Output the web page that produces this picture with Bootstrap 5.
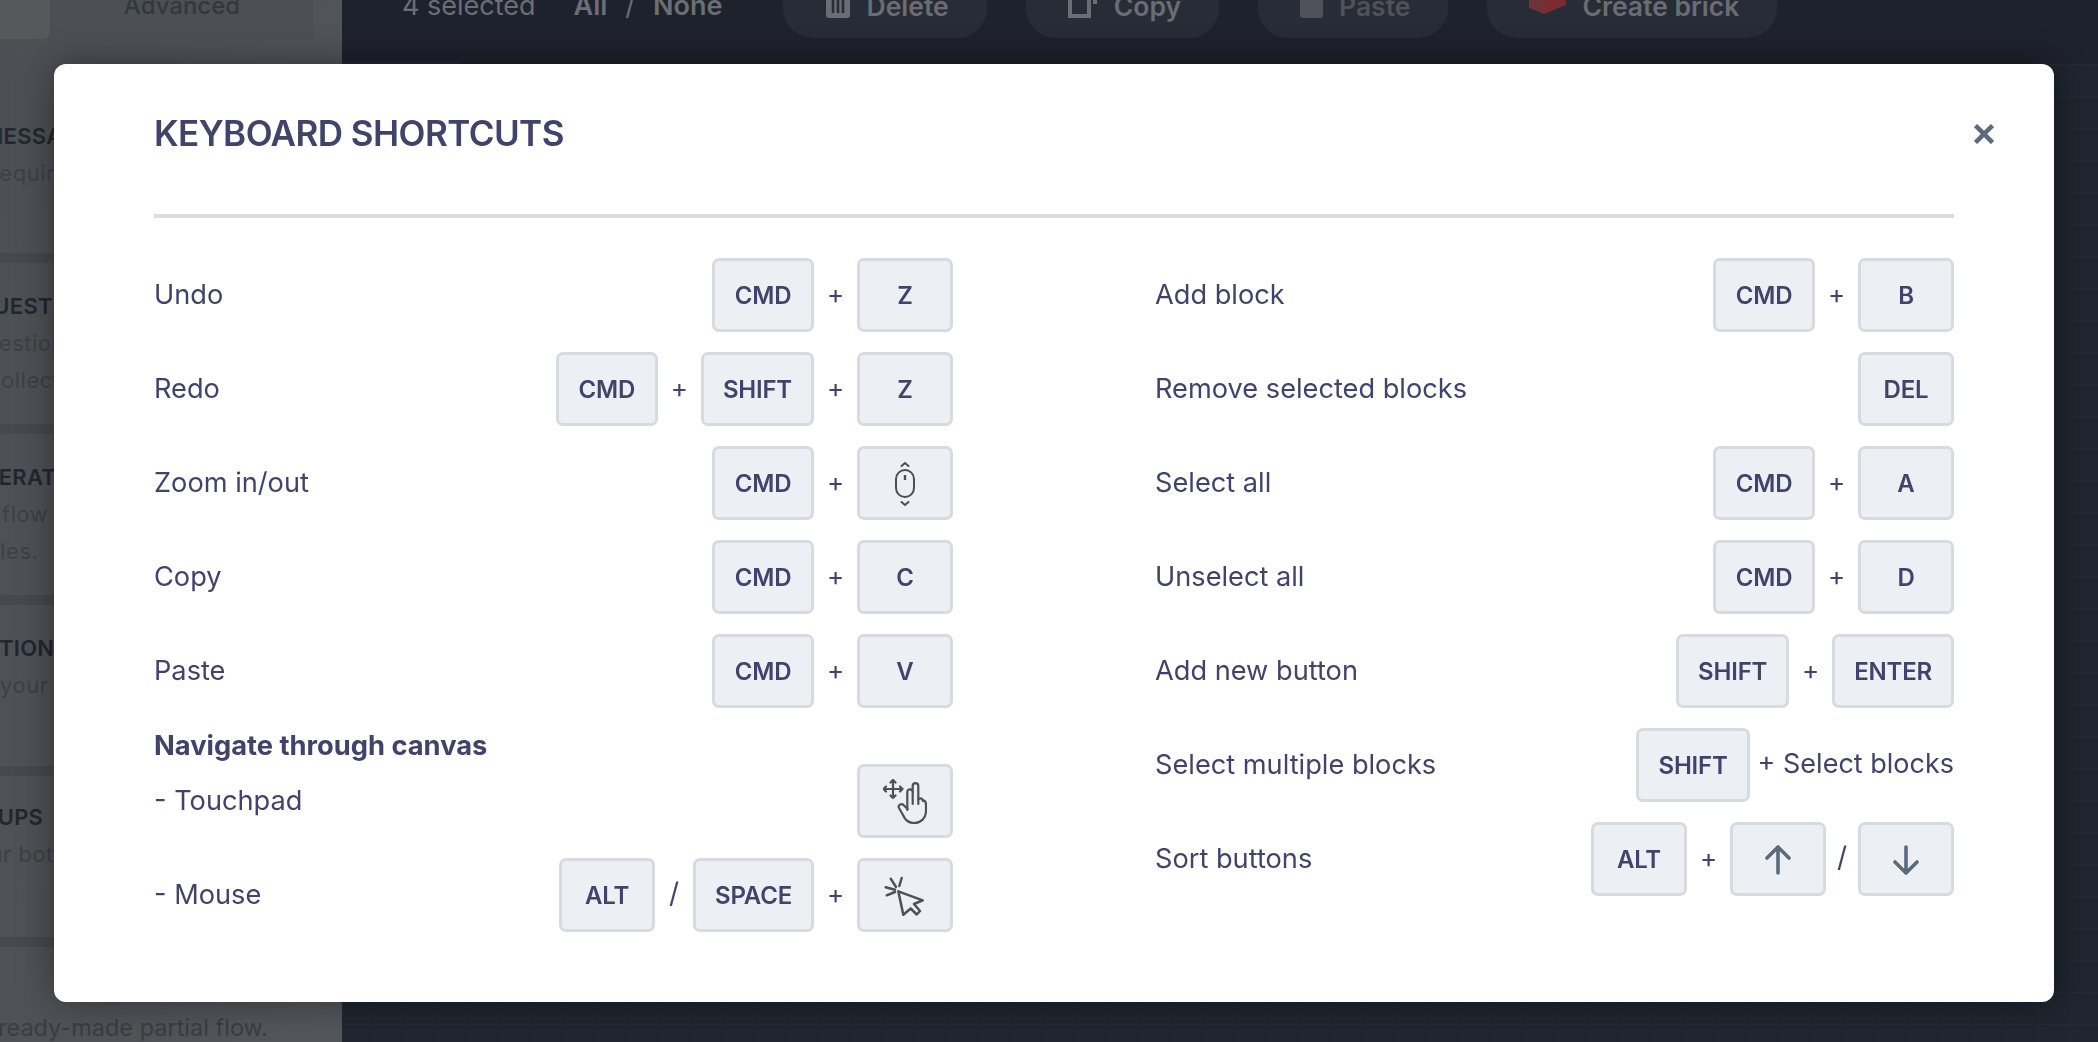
<!doctype html>
<html lang="en"><head><meta charset="utf-8"><title>Keyboard shortcuts</title>
<link href="https://cdn.jsdelivr.net/npm/bootstrap@5.3.0/dist/css/bootstrap.min.css" rel="stylesheet">
<style>
html,body{height:100%;overflow:hidden}
body{font-family:Inter,"Liberation Sans",sans-serif;background:#1f2430;color:#42436a}
.stage{height:1042px;overflow:hidden}
.side{width:342px;flex:none;background:linear-gradient(100deg,#4c5054,#53575b);color:#2a2d38;height:1042px;overflow:hidden;white-space:nowrap}
.side-tabs{height:39px}
.tab-a{width:50px;background:#55595c;border-radius:0 0 6px 0}
.tab-b{width:264px;background:#4c5054;text-align:center;font-size:24px;line-height:1;color:#34373f;font-weight:500;overflow:hidden}
.tab-b span{display:block;margin-top:-6px}
.side-sec{height:171px;padding-top:30px;border-bottom:10px solid #46494d;font-size:22px;overflow:hidden}
.side-sec-first{height:224px;padding-top:84px}
.side-sec-tight{padding-top:28px}
.side-sec b{display:block;font-weight:600;color:#23262f;line-height:26px;letter-spacing:.3px}
.side-sec b+span{margin-top:6px}
.side-sec span{display:block;color:#3d4046;line-height:37px;letter-spacing:.5px}
.off-a{margin-left:-17px}.off-b{margin-left:-24px}.off-c{margin-left:-33px}.off-d{margin-left:-51px}
.off-e{margin-left:-15px}.off-f{margin-left:-32px}.off-g{margin-left:-12px}.off-h{margin-left:-47px}.off-i{margin-left:-22px}.off-j{margin-left:-38px}
.side-foot{font-size:23.5px;color:#3a3d43;padding-top:63px;margin-left:-2px}
.canvas-area{flex:1 1 auto;height:1042px;position:relative;background-color:#20252f;background-image:linear-gradient(#252a35 1px,transparent 1px),linear-gradient(90deg,#242934 1px,transparent 1px);background-size:32px 32px;overflow:hidden}
.toolbar{margin-top:-24px;height:88px;padding-left:60px;background:#1e222d;font-size:27px;color:#6b6e74}
.toolbar b{font-weight:600}
.tool-stat{height:60px}
.tool-sel{margin-left:38px;height:60px;gap:18px}
.tool-pills{margin-left:60px;gap:39px;font-size:26.5px}
.tool-pill{height:62px;border-radius:0 0 30px 30px;background:#282c36;padding:0 38px 0 42px;font-weight:600;color:#6a6d73;display:flex;align-items:center;gap:16px;flex:none}
.tool-pill svg{margin-top:-18px;flex:none}
.tool-dim{color:#4f5259}
.node-strip{position:absolute;left:0;top:62px;width:117px;height:2px;background:#232a3f}
.modal.kb-modal{display:block;position:fixed}
.kb-dialog{max-width:2000px;width:2000px;margin:64px 0 0 54px}
.kb-content{height:938px;border:0;border-radius:12px;box-shadow:0 0 36px rgba(0,0,0,.42);padding:0 100px;color:#42436a}
.kb-head{height:154px;border-bottom:4px solid #dcdcdc;padding:0;position:relative;border-radius:0}
.kb-title{font-size:35px;font-weight:600;letter-spacing:-.55px;margin:47px 0 0;line-height:44px;text-transform:uppercase}
.kb-close{position:absolute;right:-40px;top:60px;width:20px;height:20px;padding:0;border:0;background:none;display:flex}
.kb-cols{display:grid;grid-template-columns:799px 799px;column-gap:202px;padding-top:40px}
.kb-row{height:74px;margin-bottom:20px;font-size:27.2px;display:flex;align-items:center;justify-content:space-between}
.kb-row-last{margin-bottom:0}
.kb-keys{display:flex;align-items:center}
.kb-key{height:74px;min-width:96px;padding:1px 19px 0;background:#ecf0f4;border:3px solid #d6dbdf;border-radius:7px;font-weight:600;font-size:24px;display:inline-flex;align-items:center;justify-content:center;color:#42436a;letter-spacing:-.2px}
.kb-cmd{min-width:102px}
.kb-op{width:43px;text-align:center;font-size:26px;margin-top:-4px}
.kb-slash{width:38px;text-align:center;font-size:28px;line-height:1;margin-top:-4px}
.kb-slash-sm{width:32px}
.kb-sub{font-weight:700;font-size:27.3px;line-height:32px;margin:22px 0 2px}
.kb-after{margin-left:8px;font-size:27px;margin-top:-2px}
</style></head><body>
<div class="stage d-flex">
<aside class="side">
<div class="side-tabs d-flex"><div class="tab-a"></div><div class="tab-b"><span>Advanced</span></div></div>
<div class="side-sec side-sec-first"><b class="off-a">MESSAGE</b><span class="off-e">Require a reply</span></div>
<div class="side-sec"><b class="off-b">QUESTIONS</b><span class="off-f">Question blocks</span><span class="off-g">collect data</span></div>
<div class="side-sec"><b class="off-c">OPERATORS</b><span class="off-h">Use flow logic</span><span class="off-i">rules.</span></div>
<div class="side-sec"><b class="off-c">ACTIONS</b><span>your flow work</span></div>
<div class="side-sec side-sec-tight"><b class="off-d">GROUPS</b><span class="off-j">Your bot groups</span></div>
<div class="side-foot">ready-made partial flow.</div>
</aside>
<main class="canvas-area">
<div class="toolbar d-flex align-items-center align-self-start">
<div class="tool-stat d-flex align-items-center align-self-start">4 selected</div>
<div class="tool-sel d-flex align-items-center align-self-start"><b>All</b><span>/</span><b>None</b></div>
<div class="tool-pills d-flex align-self-start">
<div class="tool-pill"><svg width="26" height="40" viewBox="0 0 26 40"><path d="M1 0h24v37a3 3 0 0 1-3 3H4a3 3 0 0 1-3-3z" fill="#6a6d73"/><path d="M8 4v31M13 4v31M18 4v31" stroke="#282c36" stroke-width="2.600"/></svg>Delete</div>
<div class="tool-pill"><svg width="30" height="40" viewBox="0 0 30 40"><path d="M2 8h19v30H2z" fill="none" stroke="#6a6d73" stroke-width="4"/><path d="M27 0v26" stroke="#6a6d73" stroke-width="4"/></svg>Copy</div>
<div class="tool-pill tool-dim"><svg width="23" height="40" viewBox="0 0 23 40"><rect width="23" height="40" rx="3" fill="#4f5259"/></svg>Paste</div>
<div class="tool-pill"><svg width="37" height="40" viewBox="0 0 37 40"><path d="M0 0h15v36L0 30z" fill="#6c3437"/><path d="M15 0h22v27L15 36z" fill="#7c2b30"/></svg>Create brick</div>
</div>
</div>
<div class="node-strip"></div>
</main>
</div>
<div class="modal kb-modal" tabindex="-1">
<div class="modal-dialog kb-dialog">
<div class="modal-content kb-content">
<div class="modal-header kb-head align-items-start">
<h5 class="modal-title kb-title">Keyboard shortcuts</h5>
<button class="kb-close" aria-label="Close"><svg width="20" height="20" viewBox="0 0 20 20"><path d="M1.500 1.500l17 17M18.500 1.500l-17 17" stroke="#5b6b7b" stroke-width="4.500"/></svg></button>
</div>
<div class="kb-cols">
<div>
<div class="kb-row"><span>Undo</span><div class="kb-keys"><span class="kb-key kb-cmd">CMD</span><span class="kb-op">+</span><span class="kb-key">Z</span></div></div>
<div class="kb-row"><span>Redo</span><div class="kb-keys"><span class="kb-key kb-cmd">CMD</span><span class="kb-op">+</span><span class="kb-key">SHIFT</span><span class="kb-op">+</span><span class="kb-key">Z</span></div></div>
<div class="kb-row"><span>Zoom in/out</span><div class="kb-keys"><span class="kb-key kb-cmd">CMD</span><span class="kb-op">+</span><span class="kb-key"><svg width="22" height="46" viewBox="0 0 22 46" fill="none" stroke="#4a4f55" stroke-width="2"><rect x="2" y="9" width="18" height="27" rx="9"/><path d="M11 14v5" stroke-width="2.400"/><path d="M7.500 5L11 2l3.500 3M7.500 41l3.500 3 3.500-3" stroke-linecap="round"/></svg></span></div></div>
<div class="kb-row"><span>Copy</span><div class="kb-keys"><span class="kb-key kb-cmd">CMD</span><span class="kb-op">+</span><span class="kb-key">C</span></div></div>
<div class="kb-row kb-row-last"><span>Paste</span><div class="kb-keys"><span class="kb-key kb-cmd">CMD</span><span class="kb-op">+</span><span class="kb-key">V</span></div></div>
<div class="kb-sub">Navigate through canvas</div>
<div class="kb-row"><span>- Touchpad</span><div class="kb-keys"><span class="kb-key"><svg width="44" height="46" viewBox="0 0 44 46" fill="none" stroke="#4c5158" stroke-width="2.200" stroke-linecap="round" stroke-linejoin="round"><path d="M0.500 10h19M10 1v18M7.500 3.500L10 1l2.500 2.500M7.500 16.500L10 19l2.500-2.500M3 7.500L0.500 10 3 12.500M17 7.500l2.500 2.500-2.500 2.500"/><path d="M24.300 31V13a2.700 2.700 0 0 1 5.400 0V7a2.800 2.800 0 0 1 5.600 0v18"/><path d="M29.700 13v12M35.300 20c3-1.500 4.500 0 4.500 2 2-1 3.200 1 3.200 4v6c0 7-5 12-12 12-6 0-9-3-11-8l-4-7c-1.500-3 2.500-5 4.500-3l4 4"/></svg></span></div></div>
<div class="kb-row"><span>- Mouse</span><div class="kb-keys"><span class="kb-key">ALT</span><span class="kb-slash">/</span><span class="kb-key">SPACE</span><span class="kb-op">+</span><span class="kb-key"><svg width="44" height="46" viewBox="0 0 44 46" fill="none" stroke="#4c5158" stroke-width="2.500" stroke-linecap="round" stroke-linejoin="round"><path d="M15.300 18.300l24.400 9-8.700 3.700 6 7-3.300 3.500-6-6-7.400 6.200z"/><path d="M18.700 5l-2.400 8M7.700 5.700L13 14M2.700 14.300l9.300 2.400M3.700 22.300L12 19"/></svg></span></div></div>
</div>
<div>
<div class="kb-row"><span>Add block</span><div class="kb-keys"><span class="kb-key kb-cmd">CMD</span><span class="kb-op">+</span><span class="kb-key">B</span></div></div>
<div class="kb-row"><span>Remove selected blocks</span><div class="kb-keys"><span class="kb-key">DEL</span></div></div>
<div class="kb-row"><span>Select all</span><div class="kb-keys"><span class="kb-key kb-cmd">CMD</span><span class="kb-op">+</span><span class="kb-key">A</span></div></div>
<div class="kb-row"><span>Unselect all</span><div class="kb-keys"><span class="kb-key kb-cmd">CMD</span><span class="kb-op">+</span><span class="kb-key">D</span></div></div>
<div class="kb-row"><span>Add new button</span><div class="kb-keys"><span class="kb-key">SHIFT</span><span class="kb-op">+</span><span class="kb-key">ENTER</span></div></div>
<div class="kb-row"><span>Select multiple blocks</span><div class="kb-keys"><span class="kb-key">SHIFT</span><span class="kb-after">+ Select blocks</span></div></div>
<div class="kb-row"><span>Sort buttons</span><div class="kb-keys"><span class="kb-key">ALT</span><span class="kb-op">+</span><span class="kb-key"><svg width="26" height="30" viewBox="0 0 26 30" fill="none" stroke="#5b6b7b" stroke-width="3.600" stroke-linecap="round" stroke-linejoin="round"><path d="M13 28V2M2 13L13 2l11 11"/></svg></span><span class="kb-slash kb-slash-sm">/</span><span class="kb-key"><svg width="26" height="30" viewBox="0 0 26 30" fill="none" stroke="#5b6b7b" stroke-width="3.600" stroke-linecap="round" stroke-linejoin="round"><path d="M13 2v26M2 17l11 11 11-11"/></svg></span></div></div>
</div>
</div>
</div>
</div>
</div>
<script src="https://cdn.jsdelivr.net/npm/bootstrap@5.3.0/dist/js/bootstrap.bundle.min.js"></script>
</body></html>
